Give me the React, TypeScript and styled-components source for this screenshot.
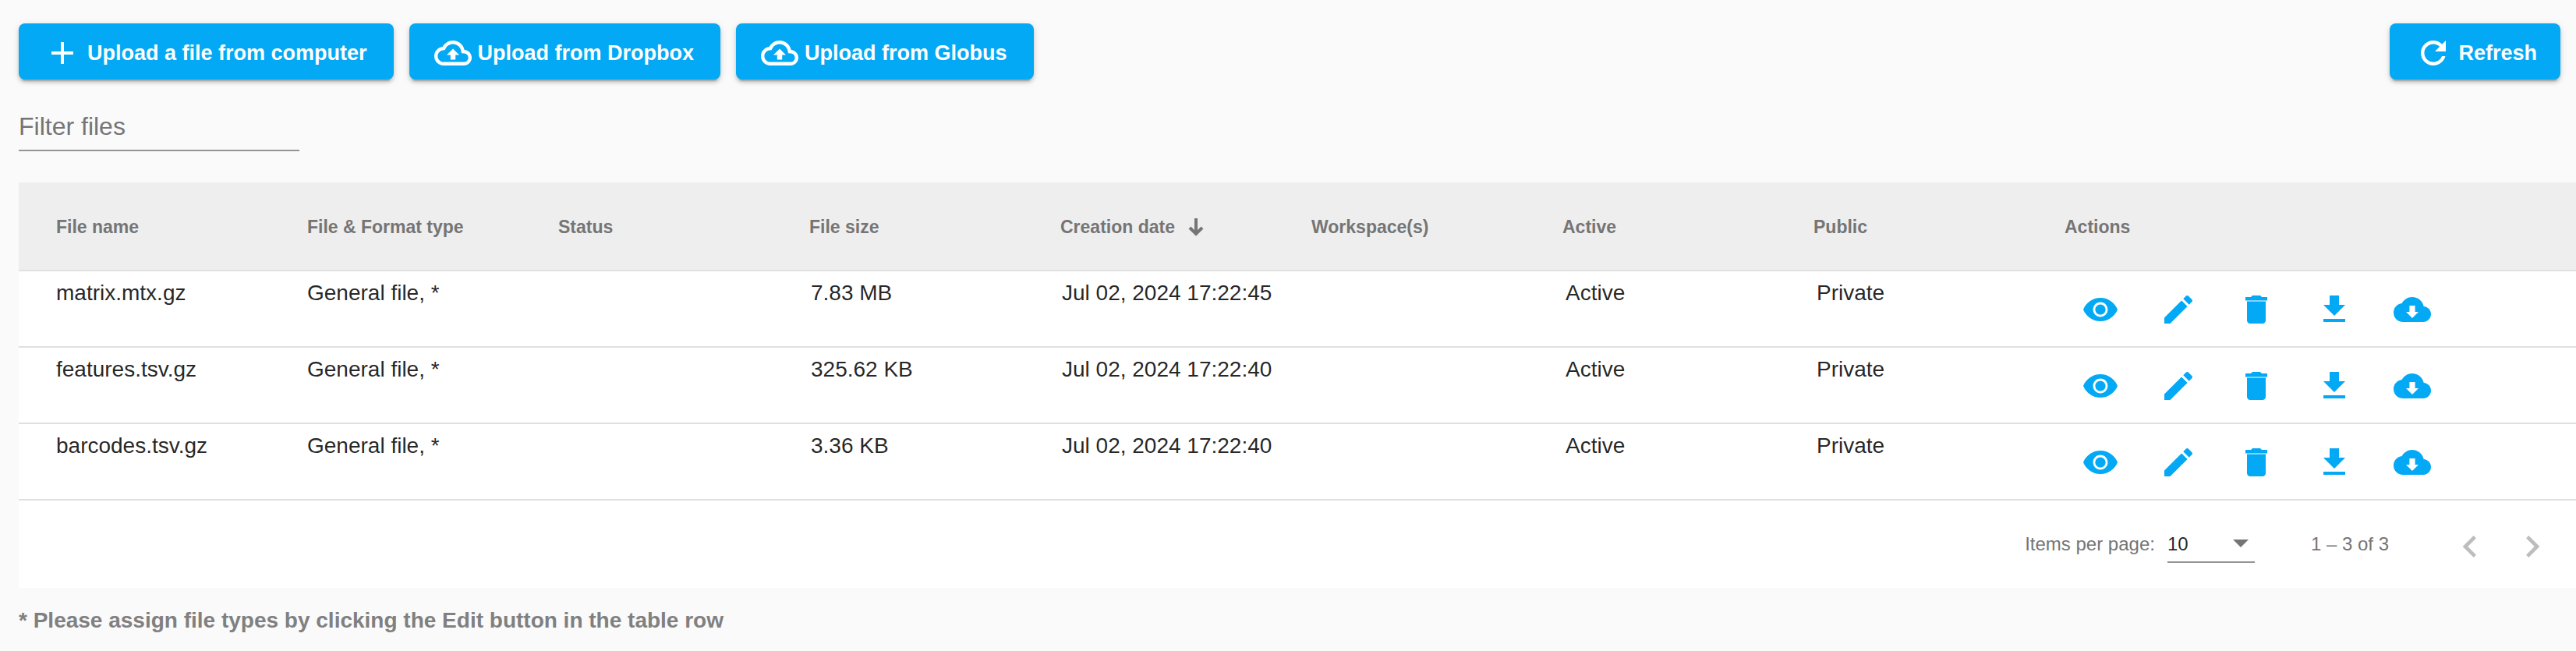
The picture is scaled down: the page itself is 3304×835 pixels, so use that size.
import React, { useState } from "react";
import styled, { createGlobalStyle } from "styled-components";

const GlobalStyle = createGlobalStyle`
  * { box-sizing: border-box; }
  body {
    margin: 0;
    background: #fafafa;
    color: rgba(0, 0, 0, 0.87);
    font-family: "Liberation Sans", Arial, sans-serif;
    font-size: 28px;
  }
  button, input, select { font: inherit; }
`;

const ICONS = {
  add: "M19 13h-6v6h-2v-6H5v-2h6V5h2v6h6v2z",
  cloudUpload:
    "M19.35 10.04C18.67 6.59 15.64 4 12 4 9.11 4 6.6 5.64 5.35 8.04 2.34 8.36 0 10.91 0 14c0 3.31 2.69 6 6 6h13c2.76 0 5-2.24 5-5 0-2.64-2.05-4.78-4.65-4.96zM19 17.8H6c-2.1 0-3.8-1.7-3.8-3.8 0-1.95 1.45-3.57 3.38-3.77l1.17-.13.55-1.03C8.2 7.3 10 6.2 12 6.2c2.52 0 4.7 1.79 5.19 4.27l.33 1.65 1.68.12c1.46.1 2.6 1.31 2.6 2.76 0 1.55-1.25 2.8-2.8 2.8zM8 13.3h2.4v3h3.2v-3H16l-4-4.1-4 4.1z",
  refresh:
    "M17.65 6.35C16.2 4.9 14.21 4 12 4c-4.42 0-7.99 3.58-7.99 8s3.57 8 7.99 8c3.73 0 6.84-2.55 7.73-6h-2.2c-.8 2.2-2.95 3.8-5.53 3.8-3.2 0-5.8-2.6-5.8-5.8s2.6-5.8 5.8-5.8c1.6 0 3.04.66 4.1 1.7L13 11h7V4l-2.35 2.35z",
  view: "M12 4.5C7 4.5 2.73 7.61 1 12c1.73 4.39 6 7.5 11 7.5s9.27-3.11 11-7.5c-1.73-4.39-6-7.5-11-7.5zM12 16.7c-2.6 0-4.7-2.1-4.7-4.7s2.1-4.7 4.7-4.7 4.7 2.1 4.7 4.7-2.1 4.7-4.7 4.7zm0-8c-1.82 0-3.3 1.48-3.3 3.3s1.48 3.3 3.3 3.3 3.3-1.48 3.3-3.3-1.48-3.3-3.3-3.3z",
  edit: "M3 17.25V21h3.75L17.81 9.94l-3.75-3.75L3 17.25zM20.71 7.04c.39-.39.39-1.02 0-1.41l-2.34-2.34c-.39-.39-1.02-.39-1.41 0l-1.83 1.83 3.75 3.75 1.83-1.83z",
  remove:
    "M6 19c0 1.1.9 2 2 2h8c1.1 0 2-.9 2-2V6.8H6V19zM19 4h-3.5l-1-1h-5l-1 1H5v2.2h14V4z",
  download: "M19 9h-4V3H9v6H5l7 7 7-7zM5 18v2h14v-2H5z",
  cloudDownload:
    "M19.35 10.04C18.67 6.59 15.64 4 12 4 9.11 4 6.6 5.64 5.35 8.04 2.34 8.36 0 10.91 0 14c0 3.31 2.69 6 6 6h13c2.76 0 5-2.24 5-5 0-2.64-2.05-4.78-4.65-4.96zM16 13.5l-4 4-4-4h2.2v-4h3.6v4H16z",
  previous: "M15.41 7.41L14 6l-6 6 6 6 1.41-1.41L10.83 12z",
  next: "M10 6L8.59 7.41 13.17 12l-4.58 4.59L10 18l6-6z",
};

type IconName = keyof typeof ICONS;

const Svg = styled.svg<{ $size: number }>`
  display: block;
  flex: none;
  width: ${(p) => p.$size}px;
  height: ${(p) => p.$size}px;
  fill: currentColor;
`;

const Icon = ({ name, size = 48 }: { name: IconName; size?: number }) => (
  <Svg $size={size} viewBox="0 0 24 24" aria-hidden="true">
    <path d={ICONS[name]} />
  </Svg>
);

const Page = styled.main`
  padding: 30px 0 24px 24px;
`;

const Toolbar = styled.div`
  display: flex;
  gap: 20px;
  padding-right: 20px;
`;

const RaisedButton = styled.button<{ $end?: boolean }>`
  display: flex;
  align-items: center;
  gap: 8px;
  height: 72px;
  margin-left: ${(p) => (p.$end ? "auto" : "0")};
  padding: 4px ${(p) => (p.$end ? 30 : 34)}px 0 32px;
  border: 0;
  border-radius: 8px;
  background: #03a9f4;
  color: #fff;
  font-size: 27px;
  font-weight: 700;
  line-height: 32px;
  white-space: nowrap;
  cursor: pointer;
  box-shadow: 0 6px 2px -4px rgba(0, 0, 0, 0.2), 0 4px 4px rgba(0, 0, 0, 0.14),
    0 2px 10px rgba(0, 0, 0, 0.12);
`;

const FilterInput = styled.input`
  display: block;
  width: 360px;
  height: 64px;
  margin: 28px 0 40px;
  padding: 2px 0 0;
  border: 0;
  border-bottom: 2px solid #949494;
  outline: 0;
  background: transparent;
  font-size: 32px;
  &::placeholder {
    color: #757575;
    opacity: 1;
  }
`;

const Panel = styled.section`
  background: #fff;
`;

const Table = styled.table`
  display: block;
  width: 100%;
`;

const Group = styled.thead`
  display: block;
`;

const Row = styled.tr<{ $head?: boolean }>`
  display: grid;
  grid-template-columns: repeat(8, minmax(0, 1fr)) 608px;
  align-items: ${(p) => (p.$head ? "center" : "start")};
  height: ${(p) => (p.$head ? 114 : 98)}px;
  padding: 0 48px;
  border-bottom: 2px solid #e0e0e0;
  background: ${(p) => (p.$head ? "#eee" : "#fff")};
`;

const HeadCell = styled.th`
  padding: 2px 0 0;
  color: #757575;
  font-size: 23px;
  font-weight: 700;
  line-height: 32px;
  text-align: left;
`;

const SortButton = styled.button`
  display: flex;
  align-items: center;
  gap: 16px;
  padding: 0;
  border: 0;
  background: none;
  color: inherit;
  cursor: pointer;
`;

const Cell = styled.td<{ $inset?: number }>`
  padding: 12px 0 0 ${(p) => p.$inset ?? 0}px;
  line-height: 32px;
`;

const ActionCell = styled.td`
  display: flex;
  gap: 20px;
  padding: 9px 0 0 6px;
`;

const IconButton = styled.button`
  display: grid;
  place-items: center;
  width: 80px;
  height: 80px;
  padding: 0;
  border: 0;
  border-radius: 50%;
  background: none;
  color: #03a9f4;
  cursor: pointer;
`;

const PageButton = styled(IconButton)`
  padding-top: 6px;
  &:disabled {
    color: #bdbdbd;
    cursor: default;
  }
`;

const Paginator = styled.nav`
  display: flex;
  align-items: center;
  justify-content: flex-end;
  height: 112px;
  padding-right: 16px;
  color: #757575;
  font-size: 24px;
`;

const SelectBox = styled.div`
  display: flex;
  align-items: center;
  width: 112px;
  height: 48px;
  margin-left: 16px;
  padding-right: 8px;
  border-bottom: 2px solid #949494;
`;

const PageSize = styled.select`
  flex: 1;
  min-width: 0;
  padding: 0;
  border: 0;
  outline: 0;
  appearance: none;
  background: transparent;
  color: rgba(0, 0, 0, 0.87);
`;

const Range = styled.span`
  margin: 0 64px 0 72px;
`;

const Note = styled.p`
  margin: 26px 0 0;
  color: #808080;
  font-weight: 700;
  line-height: 32px;
`;

const COLUMNS = [
  "File name",
  "File & Format type",
  "Status",
  "File size",
  "Creation date",
  "Workspace(s)",
  "Active",
  "Public",
  "Actions",
];

const FILES = [
  { name: "matrix.mtx.gz", size: "7.83 MB", created: "Jul 02, 2024 17:22:45" },
  { name: "features.tsv.gz", size: "325.62 KB", created: "Jul 02, 2024 17:22:40" },
  { name: "barcodes.tsv.gz", size: "3.36 KB", created: "Jul 02, 2024 17:22:40" },
];

const ACTIONS: { icon: IconName; label: string }[] = [
  { icon: "view", label: "View" },
  { icon: "edit", label: "Edit" },
  { icon: "remove", label: "Delete" },
  { icon: "download", label: "Download" },
  { icon: "cloudDownload", label: "Export to cloud" },
];

export default function App() {
  const [filter, setFilter] = useState("");
  const files = FILES.filter((f) => f.name.includes(filter));

  return (
    <Page>
      <GlobalStyle />
      <Toolbar>
        <RaisedButton type="button">
          <Icon name="add" />
          Upload a file from computer
        </RaisedButton>
        <RaisedButton type="button">
          <Icon name="cloudUpload" />
          Upload from Dropbox
        </RaisedButton>
        <RaisedButton type="button">
          <Icon name="cloudUpload" />
          Upload from Globus
        </RaisedButton>
        <RaisedButton type="button" $end>
          <Icon name="refresh" />
          Refresh
        </RaisedButton>
      </Toolbar>

      <FilterInput
        type="text"
        aria-label="Filter files"
        placeholder="Filter files"
        value={filter}
        onChange={(e) => setFilter(e.target.value)}
      />

      <Panel>
        <Table>
          <Group>
            <Row $head>
              {COLUMNS.map((title) => (
                <HeadCell key={title} scope="col">
                  {title === "Creation date" ? (
                    <SortButton type="button">
                      {title}
                      <svg width="22" height="24" viewBox="0 0 22 24" aria-hidden="true">
                        <path
                          d="M11 1v20M3 13l8 8 8-8"
                          fill="none"
                          stroke="currentColor"
                          strokeWidth="4"
                        />
                      </svg>
                    </SortButton>
                  ) : (
                    title
                  )}
                </HeadCell>
              ))}
            </Row>
          </Group>
          <Group as="tbody">
            {files.map((file) => (
              <Row key={file.name}>
                <Cell>{file.name}</Cell>
                <Cell>General file, *</Cell>
                <Cell />
                <Cell $inset={2}>{file.size}</Cell>
                <Cell $inset={2}>{file.created}</Cell>
                <Cell />
                <Cell $inset={4}>Active</Cell>
                <Cell $inset={4}>Private</Cell>
                <ActionCell>
                  {ACTIONS.map((action) => (
                    <IconButton key={action.icon} type="button" aria-label={action.label}>
                      <Icon name={action.icon} />
                    </IconButton>
                  ))}
                </ActionCell>
              </Row>
            ))}
          </Group>
        </Table>

        <Paginator aria-label="Pagination">
          <label htmlFor="page-size">Items per page:</label>
          <SelectBox>
            <PageSize id="page-size" defaultValue="10">
              <option>10</option>
              <option>25</option>
              <option>50</option>
            </PageSize>
            <svg width="20" height="10" viewBox="0 0 20 10" aria-hidden="true">
              <path d="M0 0h20L10 10z" fill="currentColor" />
            </svg>
          </SelectBox>
          <Range>1 – 3 of 3</Range>
          <PageButton type="button" aria-label="Previous page" disabled>
            <Icon name="previous" size={56} />
          </PageButton>
          <PageButton type="button" aria-label="Next page" disabled>
            <Icon name="next" size={56} />
          </PageButton>
        </Paginator>
      </Panel>

      <Note>* Please assign file types by clicking the Edit button in the table row</Note>
    </Page>
  );
}
